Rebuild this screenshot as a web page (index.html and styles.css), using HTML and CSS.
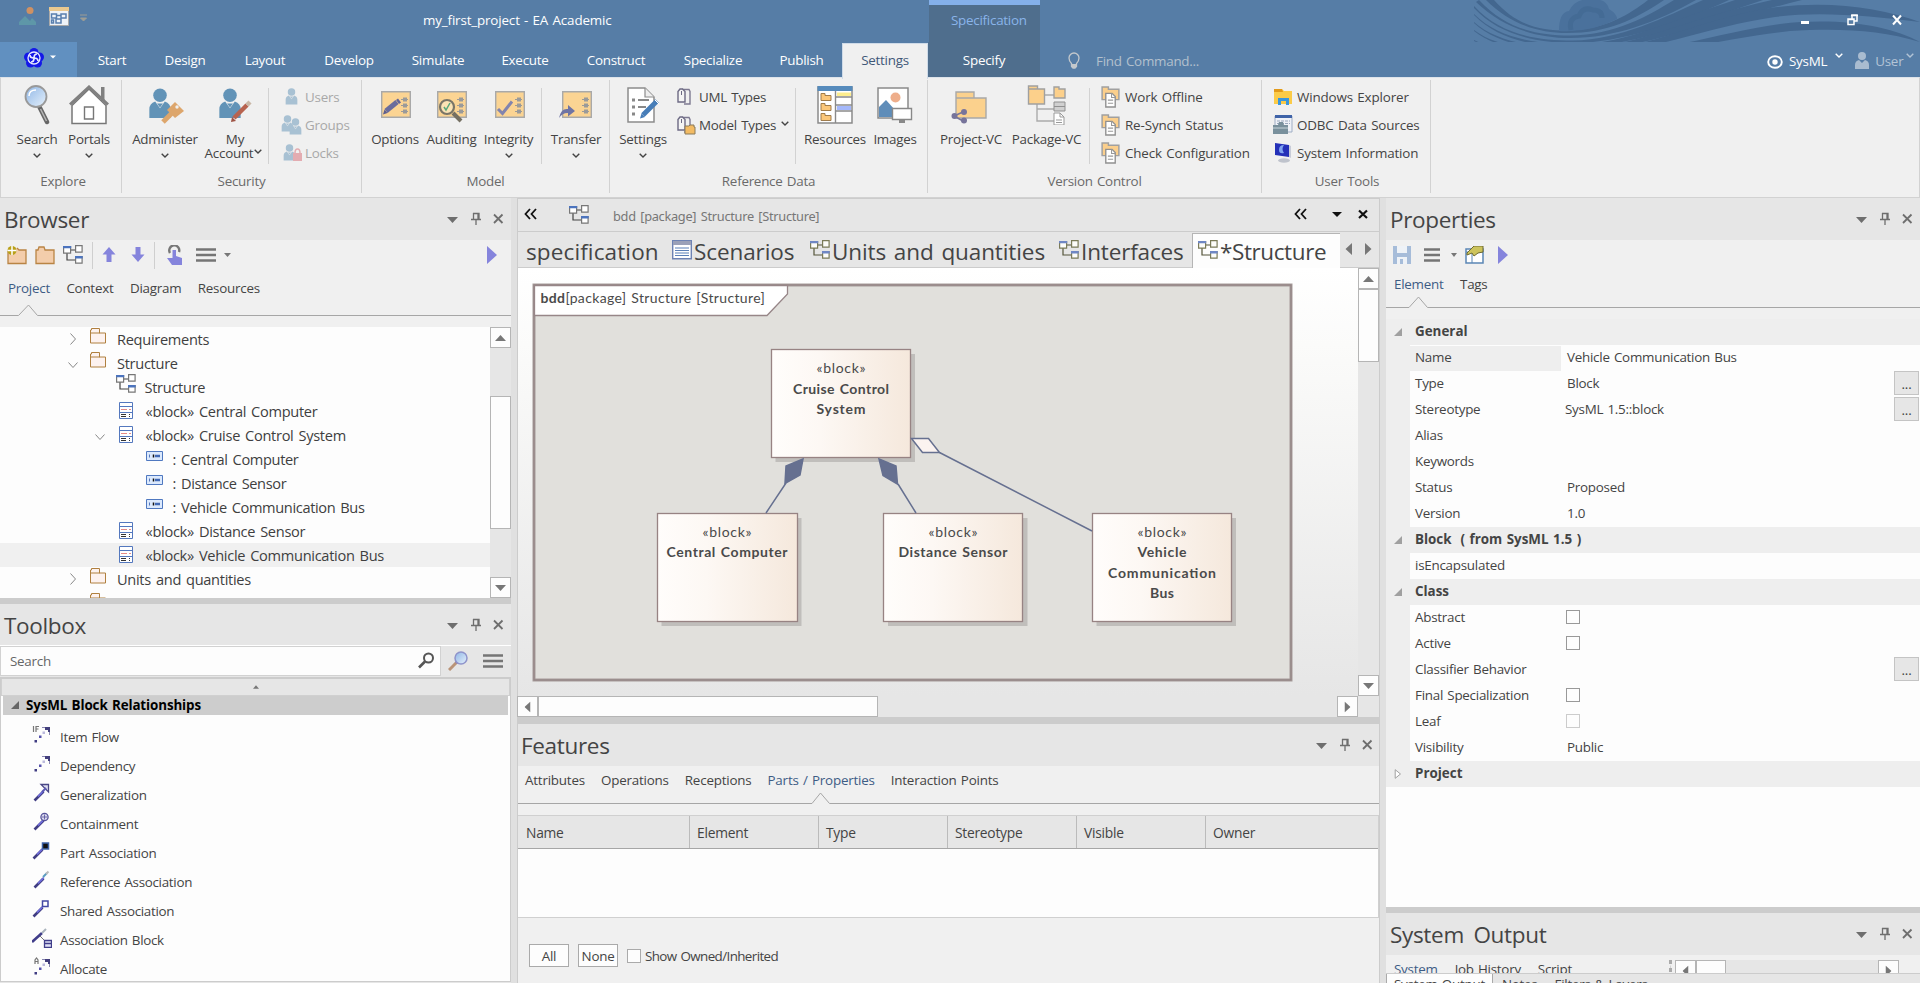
FILE: index.html
```html
<!DOCTYPE html>
<html lang="en">
<head>
<meta charset="utf-8">
<title>my_first_project - EA Academic</title>
<link rel="stylesheet" href="styles.css">
</head>
<body>
<svg class="defs" width="0" height="0">
  <defs>
    <linearGradient id="lens" x1="0" y1="0" x2="1" y2="1"><stop offset="0" stop-color="#8fb6e6"/><stop offset="1" stop-color="#e6f1fb"/></linearGradient>
    <linearGradient id="blk" x1="0" y1="0" x2="1" y2="0"><stop offset="0" stop-color="#fffdfb"/><stop offset=".35" stop-color="#fdf8f4"/><stop offset="1" stop-color="#f5e8dc"/></linearGradient>
  </defs>
  <symbol id="ctl" viewBox="0 0 62 14"><path d="M2 5h11l-5.500 6z" fill="#6e6e6e"/><path d="M28 1.500h6v6M28.500 1v6.500M26 7.500h10M31 8v5M33 1.500v6" fill="none" stroke="#6e6e6e" stroke-width="1.300"/><path d="M49 2.500l8.500 8.500M57.500 2.500l-8.500 8.500" stroke="#6e6e6e" stroke-width="1.800"/></symbol>
  <symbol id="chev" viewBox="0 0 8 5"><path d="M.7.700L4 4 7.300.700" fill="none" stroke="currentColor" stroke-width="1.400"/></symbol>
  <symbol id="up" viewBox="0 0 11 6"><path d="M0 6L5.500 0 11 6z" fill="#777"/></symbol>
  <symbol id="menu" viewBox="0 0 20 14"><path d="M0 1.500h20M0 7h20M0 12.500h20" stroke="#757575" stroke-width="2.400"/></symbol>
  <symbol id="diag" viewBox="0 0 20 20"><path d="M7 5h6M4 8v7h8" fill="none" stroke="#444" stroke-width="1.200"/><path d="M.6 1.600h7v6.500h-7zM12.600.600h6.500v6.500h-6.500zM12.600 11.600h6.500v6.500h-6.500z" fill="#fff" stroke="#777" stroke-width="1.200"/><path d="M0 1h8.200v2.200H0zM12 11h7.700v2.400H12z" fill="#4c74be"/></symbol>
  <symbol id="diag2" viewBox="0 0 20 20"><path d="M7 5h6M4 8v7h8" fill="none" stroke="#55553a" stroke-width="1.200"/><path d="M.6 1.600h7v6.500h-7zM12.600.600h6.500v6.500h-6.500zM12.600 11.600h6.500v6.500h-6.500z" fill="#fdfdfa" stroke="#7b7b58" stroke-width="1.200"/><path d="M0 1h8.200v2.200H0zM12 11h7.700v2.400H12z" fill="#6f87c4"/></symbol>
  <symbol id="fold" viewBox="0 0 16 16"><path d="M.5 15V2h1V.500h8V5h6v10zM1 5h9" fill="#fdf2ef" stroke="#b0803f"/></symbol>
  <symbol id="block" viewBox="0 0 14 17"><path d="M.5.500h13v16H.5zM0 4.500h14M0 10.500h14" fill="#fff" stroke="#5478be"/><path d="M2 7.500h6M10 7.500h2" stroke="#e58a86"/><path d="M2 12.500h5M10 12.500h1M2 14.500h5M10 14.500h1" stroke="#333"/></symbol>
  <symbol id="part" viewBox="0 0 17 10"><path d="M.5.500h16v9H.5z" fill="#dbe9fd" stroke="#4f78c0"/><path d="M3.500 3.500v3" stroke="#5478be"/><path d="M7.500 3.500v3" stroke="#111" stroke-width="1.500"/><path d="M9 5h5" stroke="#4068b4" stroke-width="2.500"/></symbol>
  <symbol id="man" viewBox="0 0 24 32"><circle cx="12" cy="7.500" r="7" fill="#6293b7"/><path d="M1 31V22q0-6 6-8l5 7 5-7q6 2 6 8v9z" fill="#6293b7"/><path d="M9 16h6l-3 4z" fill="#6293b7"/></symbol>
  <symbol id="card" viewBox="0 0 30 27"><path d="M.7.700h28.600v25.600H.7z" fill="#fbd493" stroke="#a9a9a9" stroke-width="1.400"/><path d="M20 8.500h7M20 14.500h7M20 20.500h7" stroke="#9a9a9a" stroke-width="1.200"/><path d="M22 6.500h4v4h-4zM22 12.500h4v4h-4zM22 18.500h4v4h-4z" fill="#9a9a9a"/></symbol>
  <symbol id="vc" viewBox="0 0 18 21"><path d="M1 1h6v2h10v10H1z" fill="#fbcf8c" stroke="#a0a0a0" stroke-width="1.400"/><path d="M4.500 7h6l3 3v10h-9z" fill="#fff" stroke="#909090" stroke-width="1.300"/><path d="M10 7v4h4M6.500 13.500h5M6.500 16.500h5" fill="none" stroke="#999"/></symbol>
  <symbol id="tags" viewBox="0 0 14 18"><path d="M5 1.500h7l1 2V16H7" fill="none" stroke="#7d7991" stroke-width="1.400"/><path d="M1 3.500l2-2.500h2.500L8 3.500V14H1z" fill="#f4f4f4" stroke="#6d6a84" stroke-width="1.400"/><path d="M4.500 3v4" stroke="#6d6a84"/></symbol>
  <symbol id="arr" viewBox="0 0 18 18"><path d="M9 1.500h7.500V9" fill="none" stroke="#8a88b0" stroke-width="1"/><path d="M12 1h5v5h-2V4h-3z" fill="#433f7d"/><path d="M9.500 5.500h2.500v2.500H9.500z" fill="#bbb9dc"/><path d="M6 9.500h2.500v2.500H6z" fill="#5652ac"/><path d="M1.500 14h2.500v2.500h-2.500z" fill="#403d83"/></symbol>
  <symbol id="stick" viewBox="0 0 18 18"><path d="M1.500 16.500l9-9" stroke="#403d83" stroke-width="2.600"/><path d="M5 12.500l6-6" stroke="#716ee0" stroke-width="1.600"/></symbol>
</svg>

<header class="titlebar">
  <svg class="waves" width="460" height="62" viewBox="0 0 460 62">
    <g fill="#43678f">
      <path d="M34 0C57 26 80 30.500 107 30.500 145 30 170 14 188 0h16C174 20 148 33 107 33 78 33 50 24 26 0z"/>
      <path d="M19 0C45 28 75 35.500 110 35.500 155 35 188 16 214 0h22C197 22 155 38 110 38 75 38 42 27 16 2z"/>
      <path d="M14 6C40 34 75 40.500 113 40.500 160 40 205 17 243 0h26C217 24 160 43 113 43 75 43 38 34 14 8z"/>
      <path d="M14 14C38 38 76 44.500 116 44.500 165 44 215 19 275 0h28C227 26 165 47 116 47 76 47 38 40 14 15z"/>
      <path d="M14 22C36 42 76 48.500 120 48.500 170 48 230 18 312 0h30C242 25 170 51 120 51 76 51 36 44 14 23z"/>
      <path d="M14 30C36 47 78 52.500 124 52.500 180 52 240 19 310 8 370 0 420 8 460 22 410 16 360 11 315 17 250 26 180 55 124 55 78 55 36 49 14 31z"/>
      <path d="M14 40C40 53 80 56.500 130 56.500 190 56 260 32 320 24 380 17 430 26 460 42 420 30 380 28 330 31 265 38 190 58 130 58 80 58 40 55 14 41z"/>
    </g>
    <path d="M99 31Q99 12 109 11 116-3 133 0 146-2 149 9 157 14 157 19 130 33 99 31z" fill="#4a719c"/>
    <path d="M111 30q-3-12 8-14 4-10 14-6 9 0 9 8" fill="none" stroke="#446b95" stroke-width="5"/>
  </svg>
  <div class="quick">
    <svg width="17" height="18" viewBox="0 0 17 18"><circle cx="11" cy="3.500" r="3.500" fill="#cf9163"/><path d="M0 18v-3l6-6 5 5 2-3 4 4v3z" fill="#5e97a8"/></svg>
    <svg width="20" height="19" viewBox="0 0 20 19"><path d="M.5.500h19v18H.5z" fill="#eef3f8" stroke="#aaa"/><path d="M0 0h20v4H0z" fill="#e9c88f"/><path d="M2.500 7h5v4h-5zM12 7h5v4h-5zM7 12h5v4H7zM2.500 13h2v3h-2zM7 8.500h5" fill="none" stroke="#587fae" stroke-width="1.500"/></svg>
    <svg width="7" height="8" viewBox="0 0 7 8"><path d="M0 1h7M.5 4h6L3.500 7z" stroke="#9d9d94" fill="#9d9d94"/></svg>
  </div>
  <div class="apptitle">my_first_project - EA Academic</div>
  <div class="spec">Specification</div>
  <div class="winctl"><svg width="110" height="16" viewBox="0 0 110 16"><path d="M4 10.500h8" stroke="#fff" stroke-width="3"/><path d="M55 7V3h5v6h-3M54 3.500h7" fill="none" stroke="#fff" stroke-width="1.500"/><path d="M51 7h6v5.500h-6zM51 7.500h6" fill="none" stroke="#fff" stroke-width="1.500"/><path d="M96 3.500l8 9M104 3.500l-8 9" stroke="#fff" stroke-width="2"/></svg></div>
</header>
<nav class="tabs">
  <div class="file"><svg width="20" height="20" viewBox="0 0 20 20"><g fill="#1418e8"><circle cx="10" cy="4.500" r="4.500"/><circle cx="4.500" cy="9" r="4.500"/><circle cx="15.500" cy="9" r="4.500"/><circle cx="6.500" cy="15" r="4.500"/><circle cx="13.500" cy="15" r="4.500"/></g><g fill="none" stroke="#e8ebff" stroke-width="1.300"><circle cx="10" cy="10" r="6"/><path d="M10 10q-4 0-4-3M10 10q0-4 3-4M10 10q4 0 4 3M10 10q0 4-3 4" stroke-width="1.700"/></g></svg><svg width="6" height="4" viewBox="0 0 6 4"><path d="M0 .500h6L3 3.500z" fill="#fff"/></svg></div>
  <span class="w-start">Start</span><span class="w-design">Design</span><span class="w-layout">Layout</span><span class="w-develop">Develop</span><span class="w-simulate">Simulate</span><span class="w-execute">Execute</span><span class="w-construct">Construct</span><span class="w-special">Specialize</span><span class="w-publish">Publish</span><span class="active">Settings</span><span class="specify">Specify</span>
  <div class="find"><svg width="12" height="17" viewBox="0 0 12 17"><path d="M3.500 11.500Q1 9 1 6a5 5 0 0110 0q0 3-2.500 5.500v3l-1.500 1.500h-2l-1.500-1.500z" fill="none" stroke="#c3c8cc" stroke-width="1.300"/><path d="M4 12h4v3l-1 1H5l-1-1z" fill="#c3c8cc"/></svg>Find Command...</div>
  <div class="user"><svg width="16" height="14" viewBox="0 0 16 14"><ellipse cx="8" cy="7" rx="6.800" ry="5.800" fill="none" stroke="#fff" stroke-width="1.900"/><circle cx="8" cy="7" r="2.700" fill="#fff"/></svg><b>SysML</b><svg class="c" width="8" height="5"><use href="#chev"/></svg><svg class="um" width="14" height="17" viewBox="0 0 14 17"><circle cx="7" cy="4" r="4" fill="#a9bcd0"/><path d="M0 17v-4q0-4 4-5l3 3 3-3q4 1 4 5v4z" fill="#a9bcd0"/></svg><i>User</i><svg class="c dim" width="8" height="5"><use href="#chev"/></svg></div>
</nav>

<section class="ribbon">
  <div class="group g1"><div class="items">
    <div class="big w52"><svg width="40" height="40" viewBox="0 0 40 40"><path d="M22 21l8 16" stroke="#666" stroke-width="4.500" stroke-linecap="round"/><path d="M23.500 24l6 12" stroke="#b5b5b5" stroke-width="1.500"/><circle cx="19" cy="11.500" r="10.500" fill="url(#lens)" stroke="#999" stroke-width="1.800"/><path d="M12 11q0-6 7-6" stroke="#fff" stroke-width="1.500" fill="none"/></svg><span>Search</span><svg width="8" height="5"><use href="#chev"/></svg></div>
    <div class="big w53"><svg width="40" height="40" viewBox="0 0 40 40"><path d="M32 2h3.500v14H32z" fill="#808080"/><path d="M3 20.500L20 4l17 16.500v18H3z" fill="#fff" stroke="#777" stroke-width="1.500"/><path d="M1 19.500L20 2l19 17.500" fill="none" stroke="#808080" stroke-width="3"/><path d="M15.500 22h9v12h-9z" fill="#fff" stroke="#777" stroke-width="1.400"/></svg><span>Portals</span><svg width="8" height="5"><use href="#chev"/></svg></div>
  </div><h6>Explore</h6></div>
  <div class="group g2"><div class="items">
    <div class="big w80"><svg width="40" height="40" viewBox="0 0 40 40"><use href="#man" x="3" y="3" width="24" height="31"/><path d="M18 37l10-10" stroke="#dda66c" stroke-width="5"/><path d="M22 25l8-8 9 9-9 7z" fill="#dda66c"/><circle cx="32" cy="22" r="1.700" fill="#f0f0f0"/></svg><span>Administer</span><svg width="8" height="5"><use href="#chev"/></svg></div>
    <div class="big w60"><svg width="40" height="40" viewBox="0 0 40 40"><use href="#man" x="3" y="3" width="24" height="31"/><path d="M19 33L32 20" stroke="#b8634f" stroke-width="4.500"/><path d="M32 20l3-3" stroke="#c9b7a6" stroke-width="4.500"/><path d="M16 37l1-5 4 4z" fill="#9e5344"/></svg><span>My</span><span class="l2">Account<svg width="8" height="5"><use href="#chev"/></svg></span></div>
    <div class="sep"></div>
    <div class="small dis"><p><svg width="22" height="20" viewBox="0 0 22 20"><use href="#man" x="5" y="1" width="13" height="17"/></svg>Users</p><p><svg width="22" height="20" viewBox="0 0 22 20"><use href="#man" x="1" y="0" width="13" height="17"/><use href="#man" x="9" y="3" width="13" height="17"/></svg>Groups</p><p><svg width="22" height="20" viewBox="0 0 22 20"><use href="#man" x="3" y="1" width="13" height="17"/><path d="M13 10h9v8h-9z" fill="#d76a74"/><path d="M15 10q0-4 2.500-4T20 10" fill="none" stroke="#d76a74" stroke-width="1.500"/></svg>Locks</p></div>
  </div><h6>Security</h6></div>
  <div class="group g3"><div class="items">
    <div class="big w56"><svg width="40" height="40" viewBox="0 0 40 40"><use href="#card" x="6" y="6" width="30" height="27"/><path d="M11 26L22 17" stroke="#6a6c9c" stroke-width="5"/><path d="M22.500 17l2-1.500" stroke="#62659a" stroke-width="5"/><path d="M8 29.500l1.500-5 3 3.500z" fill="#5b5e8f"/></svg><span>Options</span></div>
    <div class="big w58"><svg width="40" height="40" viewBox="0 0 40 40"><use href="#card" x="5" y="6" width="30" height="27"/><circle cx="15" cy="22" r="7" fill="#fbe3b5" stroke="#7a7668" stroke-width="2.200"/><path d="M21 28l8 8" stroke="#757063" stroke-width="4"/><path d="M12 22l2 3 4-7" fill="none" stroke="#57a87b" stroke-width="1.500"/></svg><span>Auditing</span></div>
    <div class="big w58"><svg width="40" height="40" viewBox="0 0 40 40"><use href="#card" x="6" y="6" width="30" height="27"/><path d="M9 24l4.500 4.500L23 16.500" fill="none" stroke="#8284ae" stroke-width="3"/></svg><span>Integrity</span><svg width="8" height="5"><use href="#chev"/></svg></div>
    <div class="sep"></div>
    <div class="big w68"><svg width="40" height="40" viewBox="0 0 40 40"><use href="#card" x="6" y="6" width="30" height="27"/><path d="M3 33q2-10 9-9v-4l7 6-7 5.500v-3.500q-5-.500-9 5z" fill="#6f74a4"/></svg><span>Transfer</span><svg width="8" height="5"><use href="#chev"/></svg></div>
  </div><h6>Model</h6></div>
  <div class="group g4"><div class="items">
    <div class="big w66"><svg width="40" height="40" viewBox="0 0 40 40"><path d="M5 3h17l9 9v25H5z" fill="#fff" stroke="#8c8c8c" stroke-width="1.500"/><path d="M22 3v9h9" fill="#eee" stroke="#8c8c8c" stroke-width="1.200"/><path d="M9 15h3M9 22h3M9 29h3" stroke="#888" stroke-width="3"/><path d="M15 15h11M15 22h8" stroke="#888" stroke-width="1.800"/><path d="M20 30L34 16" stroke="#467db8" stroke-width="5"/><path d="M17 33.500l1.500-5 3.500 3.500z" fill="#467db8"/><path d="M32 15l4 4" stroke="#fff" stroke-width="1"/></svg><span>Settings</span><svg width="8" height="5"><use href="#chev"/></svg></div>
    <div class="small s4"><p><svg width="19" height="20" viewBox="0 0 19 20"><use href="#tags" x="0" y="1" width="14" height="18"/></svg>UML Types</p><p><svg width="19" height="20" viewBox="0 0 19 20"><use href="#tags" x="0" y="1" width="14" height="18"/><path d="M8 11h4l1-1h4v2h1v7H8z" fill="#f3bb63" stroke="#8a7a5b"/></svg>Model Types<svg class="mc" width="8" height="5"><use href="#chev"/></svg></p></div>
    <div class="sep"></div>
    <div class="big w78"><svg width="40" height="40" viewBox="0 0 40 40"><path d="M3 2h34v36H3z" fill="#fff" stroke="#8a8a8a" stroke-width="1.500"/><path d="M2.500 1h35v5h-35z" fill="#568bbc"/><path d="M20.500 6v32M21 12h16M21 20h16M21 26h16" stroke="#8a8a8a" stroke-width="1.400"/><path d="M22 7.500h14v3.500H22z" fill="#fdee8e"/><path d="M22 21h14v4H22z" fill="#a4b8fb"/><path d="M6 8.500h4v2h6v5H6zM6 18.500h4v2h6v5H6zM6 28.500h4v2h6v5H6z" fill="#fbc77a" stroke="#a07c4c"/></svg><span>Resources</span></div>
    <div class="big w46"><svg width="40" height="40" viewBox="0 0 40 40"><path d="M3 3h30v30H3z" fill="#fff" stroke="#8a8a8a" stroke-width="1.500"/><circle cx="20.500" cy="12.500" r="5" fill="#eeae8b"/><path d="M4 32V22l7-7 9 10v7z" fill="#5f8db9"/><path d="M17.500 23.500h19v11h-19z" fill="#fff" stroke="#888" stroke-width="1.400"/><path d="M24 35h6v3h-6z" fill="#888"/></svg><span>Images</span></div>
  </div><h6>Reference Data</h6></div>
  <div class="group g5"><div class="items">
    <div class="big w76"><svg width="40" height="40" viewBox="0 0 40 40"><path d="M5 7h18v6h12v20H5zM5 13h20" fill="#fbd18d" stroke="#a8a8a8" stroke-width="1.400"/><path d="M3 31l9-4M3 31l9 5" stroke="#77759a" stroke-width="1.500"/><circle cx="3.500" cy="31" r="3" fill="#77749b"/><circle cx="13" cy="27" r="3" fill="#77749b"/><circle cx="13" cy="35.500" r="3" fill="#77749b"/></svg><span>Project-VC</span></div>
    <div class="big w77"><svg width="40" height="40" viewBox="0 0 40 40"><path d="M17 10h10M10 19v17h18M10 24h17" fill="none" stroke="#aaa" stroke-width="1.400"/><path d="M1.500 1h9v3h7v15h-16zM27 2h5v2h6v9H27zM1.500 4h10" fill="#fcd08b" stroke="#a0a0a0" stroke-width="1.400"/><path d="M27 17h11v9H27zM27 21.500h11" fill="#d0d0d0" stroke="#909090"/><path d="M27 28h6l4 4v8H27z" fill="#fff" stroke="#999"/><path d="M33 28v4h4M29 35h6M29 37.500h6" fill="none" stroke="#999"/></svg><span>Package-VC</span></div>
    <div class="sep"></div>
    <div class="small s5"><p><svg width="22" height="22" viewBox="0 0 22 22"><use href="#vc" x="0" y="0" width="19" height="22"/></svg>Work Offline</p><p><svg width="22" height="22" viewBox="0 0 22 22"><use href="#vc" x="0" y="0" width="19" height="22"/></svg>Re-Synch Status</p><p><svg width="22" height="22" viewBox="0 0 22 22"><use href="#vc" x="0" y="0" width="19" height="22"/></svg>Check Configuration</p></div>
  </div><h6>Version Control</h6></div>
  <div class="group g6"><div class="items">
    <div class="small s6"><p><svg width="22" height="20" viewBox="0 0 22 20"><path d="M1 2h8l2 2h8v13H1z" fill="#fbcb48"/><path d="M1 2h8l1 3H1z" fill="#e29a1b"/><path d="M5 18v-7h11v7h-3v-4H8v4z" fill="#3a96dd"/></svg>Windows Explorer</p><p><svg width="22" height="20" viewBox="0 0 22 20"><path d="M2 1h17v16H2z" fill="#eef1f7" stroke="#9fadc4"/><path d="M2 0h17v3H2z" fill="#3f63a8"/><path d="M4 6h13M4 8.500h13" stroke="#9aa7bd" stroke-dasharray="3 1"/><path d="M0 10h5l1-3h4l1 3h4v9H0z" fill="#79909c"/><path d="M0 13h15" stroke="#c7d3d9"/></svg>ODBC Data Sources</p><p><svg width="22" height="20" viewBox="0 0 22 20"><ellipse cx="11" cy="17.500" rx="6" ry="2.200" fill="#bfc3cc"/><path d="M2 0l14 2v12L2 12z" fill="#2430b8"/><path d="M16 2l2 1v12l-2-1z" fill="#c8ccd8"/><path d="M6 7q0-5 5-5-3 4 0 8-5 1-5-3z" fill="#7fa3f0"/></svg>System Information</p></div>
  </div><h6>User Tools</h6></div>
</section>

<main>
  <div class="col left">
    <section class="panel browser">
      <div class="head"><h2>Browser</h2><svg width="62" height="14"><use href="#ctl"/></svg></div>
      <div class="tools">
        <svg width="20" height="20" viewBox="0 0 20 20"><path d="M1 6V18.500h18V5h-7l-2-2" fill="#f3cdab" stroke="#b98444" stroke-width="1.300"/><circle cx="5" cy="5.500" r="4.500" fill="#b9a018"/><path d="M5 1v9M.5 5.500h9" stroke="#fff" stroke-width="1.500"/></svg>
        <svg class="m8" width="20" height="20" viewBox="0 0 20 20"><path d="M1 5h2l1-3h5l1 3h9v13.500H1z" fill="#f3cdab" stroke="#b98444" stroke-width="1.300"/></svg>
        <svg class="m8" width="20" height="20"><use href="#diag"/></svg>
        <i class="bar"></i>
        <svg class="m11" width="14" height="16" viewBox="0 0 14 16"><path d="M7 0l6.500 7.500h-4V15h-5V7.500h-4z" fill="#8584dc"/></svg>
        <svg class="m15" width="14" height="16" viewBox="0 0 14 16"><path d="M7 15L.5 7.500h4V0h5v7.500h4z" fill="#8584dc"/></svg>
        <i class="bar"></i>
        <svg class="m10" width="16" height="20" viewBox="0 0 16 20"><path d="M3 8a5 5 0 119-1" fill="none" stroke="#777" stroke-width="2.400"/><path d="M5.500 5h3.500v6l6 2v7H5l-5-7h5.500z" fill="#8584dc"/></svg>
        <svg class="m13" width="20" height="14"><use href="#menu"/></svg>
        <svg class="m8" width="7" height="4" viewBox="0 0 7 4"><path d="M0 0h7L3.500 4z" fill="#777"/></svg>
        <svg class="end" width="10" height="18" viewBox="0 0 10 18"><path d="M0 0l10 9-10 9z" fill="#8584dc"/></svg>
      </div>
      <div class="subtabs"><span class="on">Project</span><span>Context</span><span>Diagram</span><span>Resources</span></div>
      <svg class="rule" width="511" height="12" viewBox="0 0 511 12"><path d="M0 11.500h18.500L28.500 1l9 10.500H511" fill="none" stroke="#a6a6a6"/></svg>
      <div class="treewrap">
        <div class="tree">
          <div class="row d1"><svg class="ex" width="6" height="12" viewBox="0 0 6 12"><path d="M.5.500l5 5.500-5 5.500" fill="none" stroke="#888"/></svg><svg width="16" height="16"><use href="#fold"/></svg>Requirements</div>
          <div class="row d1"><svg class="ex v" width="10" height="6" viewBox="0 0 10 6"><path d="M.5.500L5 5.500l4.500-5" fill="none" stroke="#888"/></svg><svg width="16" height="16"><use href="#fold"/></svg>Structure</div>
          <div class="row d2 dg"><svg width="20" height="20"><use href="#diag"/></svg>Structure</div>
          <div class="row d2"><svg width="14" height="17"><use href="#block"/></svg>«block» Central Computer</div>
          <div class="row d2 op"><svg class="ex v" width="10" height="6" viewBox="0 0 10 6"><path d="M.5.500L5 5.500l4.500-5" fill="none" stroke="#888"/></svg><svg width="14" height="17"><use href="#block"/></svg>«block» Cruise Control System</div>
          <div class="row d3"><svg width="17" height="10"><use href="#part"/></svg>: Central Computer</div>
          <div class="row d3"><svg width="17" height="10"><use href="#part"/></svg>: Distance Sensor</div>
          <div class="row d3"><svg width="17" height="10"><use href="#part"/></svg>: Vehicle Communication Bus</div>
          <div class="row d2"><svg width="14" height="17"><use href="#block"/></svg>«block» Distance Sensor</div>
          <div class="row d2 sel"><svg width="14" height="17"><use href="#block"/></svg>«block» Vehicle Communication Bus</div>
          <div class="row d1"><svg class="ex" width="6" height="12" viewBox="0 0 6 12"><path d="M.5.500l5 5.500-5 5.500" fill="none" stroke="#888"/></svg><svg width="16" height="16"><use href="#fold"/></svg>Units and quantities</div>
          <div class="row d1 last"><svg width="16" height="16"><use href="#fold"/></svg></div>
        </div>
        <div class="vscroll"><span class="btn"><svg width="11" height="6"><use href="#up"/></svg></span><span class="thumb t1"></span><span class="btn dn"><svg width="11" height="6"><use href="#up"/></svg></span></div>
      </div>
    </section>
    <section class="panel toolbox">
      <div class="head"><h2>Toolbox</h2><svg width="62" height="14"><use href="#ctl"/></svg></div>
      <div class="searchrow"><div class="input"><span>Search</span><svg width="17" height="17" viewBox="0 0 17 17"><circle cx="10.500" cy="6" r="4.500" fill="none" stroke="#555" stroke-width="2"/><path d="M7 9.500l-6 6" stroke="#555" stroke-width="2.600"/></svg></div><svg class="lens2" width="20" height="20" viewBox="0 0 20 20"><path d="M1 19l8-8" stroke="#ba9478" stroke-width="3"/><path d="M8 12l2-2" stroke="#8a83bb" stroke-width="3"/><circle cx="13" cy="7" r="6" fill="url(#lens)" stroke="#8f94cb" stroke-width="1.500"/></svg><svg width="20" height="14"><use href="#menu"/></svg></div>
      <div class="tbox">
        <div class="strip"><svg width="6" height="4"><use href="#up"/></svg></div>
        <div class="ghead"><svg width="8" height="8" viewBox="0 0 8 8"><path d="M8 0v8H0z" fill="#666"/></svg>SysML Block Relationships</div>
        <div class="tlist">
          <div><svg width="20" height="20" viewBox="0 0 20 20"><path d="M1.500 1v6M4 7V1.500h3M4 4h2.500" fill="none" stroke="#777" stroke-width="1.200"/><use href="#arr" x="1" y="1" width="18" height="18"/></svg>Item Flow</div>
          <div><svg width="20" height="20" viewBox="0 0 20 20"><use href="#arr" x="1" y="1" width="18" height="18"/></svg>Dependency</div>
          <div><svg width="20" height="20" viewBox="0 0 20 20"><use href="#stick" x="1" y="1" width="18" height="18"/><path d="M9 1.500h7.500V9z" fill="#dedef0" stroke="#4a4786" stroke-width="1.300"/><path d="M10 9l4-4" stroke="#5c59b5" stroke-width="2"/></svg>Generalization</div>
          <div><svg width="20" height="20" viewBox="0 0 20 20"><use href="#stick" x="1" y="1" width="18" height="18"/><circle cx="12.500" cy="5" r="3.600" fill="#dcdcf0" stroke="#55529a" stroke-width="1.300"/><path d="M10 5h5M12.500 2.500v5" stroke="#55529a" stroke-width=".8"/></svg>Containment</div>
          <div><svg width="20" height="20" viewBox="0 0 20 20"><use href="#stick" x="0" y="1" width="18" height="18"/><path d="M10.500 2h6v6h-6z" fill="#111" stroke="#3e63a8" stroke-width="1.500"/></svg>Part Association</div>
          <div><svg width="20" height="20" viewBox="0 0 20 20"><use href="#stick" x="1" y="1" width="18" height="18"/><path d="M11 7l4-4" stroke="#5a9cc0" stroke-width="2"/><path d="M14 4l2.500-2.500" stroke="#bbb" stroke-width="2"/></svg>Reference Association</div>
          <div><svg width="20" height="20" viewBox="0 0 20 20"><use href="#stick" x="0" y="1" width="18" height="18"/><path d="M10.500 2h5.500v5.500h-5.500z" fill="#fff" stroke="#4348a4" stroke-width="1.500"/></svg>Shared Association</div>
          <div><svg width="20" height="20" viewBox="0 0 20 20"><path d="M0 14L10 5" stroke="#403d8a" stroke-width="2.600"/><path d="M10 5l4-4" stroke="#aab4bd" stroke-width="2"/><path d="M8 8l5 5" stroke="#777"/><path d="M12.500 12.500h7v7h-7zM12.500 15.500h7" fill="#dfe0f4" stroke="#403d8a" stroke-width="1.300"/></svg>Association Block</div>
          <div><svg width="20" height="20" viewBox="0 0 20 20"><path d="M3 7V3l1.500-2L6 3v4M3 4.500h3" fill="none" stroke="#777" stroke-width="1.200"/><use href="#arr" x="1" y="1" width="18" height="18"/></svg>Allocate</div>
        </div>
      </div>
    </section>
  </div>

  <div class="col center">
    <div class="crumbs">
      <svg width="13" height="12" viewBox="0 0 13 12"><path d="M6 1L1.500 6 6 11M12 1L7.500 6l4.500 5" fill="none" stroke="#111" stroke-width="1.800"/></svg>
      <svg class="cd" width="20" height="20"><use href="#diag"/></svg><span>bdd [package] Structure [Structure]</span>
      <svg class="cr" width="76" height="12" viewBox="0 0 76 12"><path d="M6 1L1.500 6 6 11M12 1L7.500 6l4.500 5" fill="none" stroke="#111" stroke-width="1.800"/><path d="M38 4h10l-5 5z" fill="#111"/><path d="M65 2.500l8 7.500M73 2.500l-8 7.500" stroke="#111" stroke-width="2.200"/></svg>
    </div>
    <div class="doctabs">
      <span class="t-spec">specification</span>
      <span class="t-scen"><svg width="20" height="20" viewBox="0 0 20 20"><path d="M.7.700h18.600v18H.7z" fill="#fff" stroke="#6d82b3" stroke-width="1.400"/><path d="M1 1h18v4H1z" fill="#9aa0b8"/><path d="M3 8h14M3 10.500h14M3 13h14M3 15.500h14" stroke="#5b80b8" stroke-width="1.200"/></svg>Scenarios</span>
      <span class="t-unit"><svg width="20" height="20"><use href="#diag2"/></svg>Units and quantities</span>
      <span class="t-int"><svg width="20" height="20"><use href="#diag2"/></svg>Interfaces</span>
      <span class="t-str"><svg width="20" height="20"><use href="#diag2"/></svg>*Structure</span>
      <svg class="nav" width="28" height="12" viewBox="0 0 28 12"><path d="M7 0v12L.5 6zM20 0v12l6.500-6z" fill="#777"/></svg>
    </div>
    <div class="canvasgrid">
      <svg class="canvas" width="840" height="428" viewBox="518 268 840 428">
        <rect x="534" y="285" width="757" height="395" fill="#e1e0dc" stroke="#a69b9a" stroke-width="3"/>
        <rect x="534" y="285" width="757" height="395" fill="none" stroke="#8f8080" stroke-width="1"/>
        <path d="M534.500 285.500H787.500v8.500L767 315.500H534.500z" fill="#fff" stroke="#978688" stroke-width="1.300"/>
        <text class="ft" x="540.500" y="302.500" textLength="224" lengthAdjust="spacing"><tspan font-weight="700">bdd</tspan>[package] Structure [Structure]</text>
        <g fill="#c0bebb"><path d="M775.500 354h139.500v108h-139.500zM661.500 518h140v108h-140zM888 518h139.500v108H888zM1096.500 518h139.500v108h-139.500z"/></g>
        <g fill="url(#blk)" stroke="#978383" stroke-width="1.300"><rect x="771.500" y="349.500" width="139" height="108"/><rect x="657.500" y="513.500" width="140" height="108"/><rect x="883.500" y="513.500" width="139" height="108"/><rect x="1092.500" y="513.500" width="139" height="108"/></g>
        <g stroke="#667090" stroke-width="1.500" fill="#667090"><path d="M766 513l20-30M916 513l-18-29M939.500 452.500L1092 531" fill="none"/><path d="M803 459l-17 7-1 17.500L800 475z"/><path d="M879 459l17 7 1.500 18-14.500-8.500z"/><path d="M911.500 438.500h17l11 14h-17z" fill="#fbf3f0"/></g>
        <g class="bt" text-anchor="middle"><text x="841" y="373" textLength="49">«block»</text><text x="841" y="394" class="b" textLength="96">Cruise Control</text><text x="841" y="414" class="b" textLength="49">System</text>
        <text x="727" y="537" textLength="49">«block»</text><text x="727" y="557" class="b" textLength="121">Central Computer</text>
        <text x="953" y="537" textLength="49">«block»</text><text x="953" y="557" class="b" textLength="109">Distance Sensor</text>
        <text x="1162" y="537" textLength="49">«block»</text><text x="1162" y="557" class="b" textLength="49">Vehicle</text><text x="1162" y="578" class="b" textLength="108">Communication</text><text x="1162" y="598" class="b" textLength="24">Bus</text></g>
      </svg>
      <div class="vscroll cv"><span class="btn"><svg width="11" height="6"><use href="#up"/></svg></span><span class="thumb t2"></span><span class="btn dn"><svg width="11" height="6"><use href="#up"/></svg></span></div>
      <div class="hscroll"><span class="btn l"><svg width="11" height="6"><use href="#up"/></svg></span><span class="thumb"></span><span class="btn r"><svg width="11" height="6"><use href="#up"/></svg></span></div>
    </div>
    <section class="panel features">
      <div class="head"><h2>Features</h2><svg width="62" height="14"><use href="#ctl"/></svg></div>
      <div class="subtabs"><span>Attributes</span><span>Operations</span><span>Receptions</span><span class="on">Parts / Properties</span><span>Interaction Points</span></div>
      <svg class="rule" width="863" height="12" viewBox="0 0 863 12"><path d="M0 11.500h294L302.500 1l9 10.500H863" fill="none" stroke="#a6a6a6"/></svg>
      <div class="table"><div class="th"><span>Name</span><span>Element</span><span>Type</span><span>Stereotype</span><span>Visible</span><span>Owner</span></div></div>
      <div class="foot"><button>All</button><button>None</button><label><i></i>Show Owned/Inherited</label></div>
    </section>
  </div>

  <div class="col right">
    <section class="panel props">
      <div class="head"><h2>Properties</h2><svg width="62" height="14"><use href="#ctl"/></svg></div>
      <div class="tools">
        <svg width="18" height="18" viewBox="0 0 18 18"><path d="M0 0h18v18H0z" fill="#a6bcd9"/><path d="M4 0h10v7H4zM4 11h10v7H4z" fill="#eef2f7"/><path d="M7 13h3v5H7z" fill="#a6bcd9"/></svg>
        <svg class="m13" width="16" height="14" viewBox="0 0 16 14"><path d="M0 1.500h16M0 7h16M0 12.500h16" stroke="#757575" stroke-width="2.400"/></svg>
        <svg class="m11" width="6" height="4" viewBox="0 0 6 4"><path d="M0 0h6L3 4z" fill="#777"/></svg>
        <svg class="m8" width="20" height="18" viewBox="0 0 20 18"><path d="M1 3h17v14H1z" fill="#fff" stroke="#5b86b5" stroke-width="1.500"/><path d="M7 4v13M1 6h17" stroke="#5b86b5"/><path d="M2 7L9 0h9v6l-5 1-4 3-2-3-5 2z" fill="#ccc35c" stroke="#6f6b32"/></svg>
        <svg class="m13" width="10" height="18" viewBox="0 0 10 18"><path d="M0 0l10 9-10 9z" fill="#8584dc"/></svg>
      </div>
      <div class="subtabs"><span class="on">Element</span><span>Tags</span></div>
      <svg class="rule" width="534" height="12" viewBox="0 0 534 12"><path d="M0 11.500h23L32.500 1l9 10.500H534" fill="none" stroke="#a6a6a6"/></svg>
      <div class="pgrid">
        <div class="pg"><svg width="8" height="8" viewBox="0 0 8 8"><path d="M8 0v8H0z" fill="#a0a0a0"/></svg>General</div>
        <div class="pr sel"><span>Name</span><em>Vehicle Communication Bus</em></div>
        <div class="pr"><span>Type</span><em>Block</em><b>...</b></div>
        <div class="pr"><span>Stereotype</span><em class="st">SysML 1.5::block</em><b>...</b></div>
        <div class="pr"><span>Alias</span></div>
        <div class="pr"><span>Keywords</span></div>
        <div class="pr"><span>Status</span><em>Proposed</em></div>
        <div class="pr"><span>Version</span><em>1.0</em></div>
        <div class="pg"><svg width="8" height="8" viewBox="0 0 8 8"><path d="M8 0v8H0z" fill="#a0a0a0"/></svg>Block&nbsp; ( from SysML 1.5 )</div>
        <div class="pr"><span>isEncapsulated</span></div>
        <div class="pg"><svg width="8" height="8" viewBox="0 0 8 8"><path d="M8 0v8H0z" fill="#a0a0a0"/></svg>Class</div>
        <div class="pr"><span>Abstract</span><i></i></div>
        <div class="pr"><span>Active</span><i></i></div>
        <div class="pr"><span>Classifier Behavior</span><b>...</b></div>
        <div class="pr"><span>Final Specialization</span><i></i></div>
        <div class="pr"><span>Leaf</span><i class="off"></i></div>
        <div class="pr"><span>Visibility</span><em>Public</em></div>
        <div class="pg"><svg width="7" height="10" viewBox="0 0 7 10"><path d="M.7.700v8.600L6 5z" fill="#fff" stroke="#a0a0a0"/></svg>Project</div>
      </div>
    </section>
    <section class="panel sysout">
      <div class="head"><h2>System Output</h2><svg width="62" height="14"><use href="#ctl"/></svg></div>
      <div class="so"><span class="on">System</span><span>Job History</span><span>Script</span><div class="sb"><i class="grip"></i><span class="btn l"><svg width="11" height="6"><use href="#up"/></svg></span><span class="thumb"></span><span class="btn r"><svg width="11" height="6"><use href="#up"/></svg></span></div></div>
      <div class="bt2"><span class="on">System Output</span><span>Notes</span><span>Filters &amp; Layers</span></div>
    </section>
  </div>
</main>
</body>
</html>
```
FILE: styles.css
```css
* { box-sizing: border-box; }
body { margin: 0; width: 1920px; height: 983px; overflow: hidden; background: #e0e0e0; color: #444; font: 13.4px/18px "Open Sans", "Noto Sans", sans-serif; letter-spacing: -.25px; word-spacing: 1px; display: flex; flex-direction: column; }
svg { display: block; flex: none; }
.defs { position: absolute; }
h2, h6, p { margin: 0; font-weight: 400; }

/* title bar */
.titlebar { height: 42px; background: #567da6; color: #fff; display: flex; position: relative; flex: none; }
.waves { position: absolute; left: 1460px; top: 0; }
.quick { width: 423px; padding: 7px 0 0 19px; display: flex; gap: 13px; }
.quick svg:last-child { margin: 7px 0 0 -2px; }
.apptitle { width: 506px; padding-top: 11px; letter-spacing: -.15px; }
.spec { width: 111px; height: 42px; border-top: 5px solid #84b0ea; background: #4f6e8d; color: #8ab4ea; padding: 6px 0 0 22px; letter-spacing: -.25px; }
.winctl { margin-left: 757px; padding-top: 12px; position: relative; }
.tabs { height: 35px; background: #567da6; display: flex; flex: none; color: #fff; position: relative; }
.tabs > span { display: flex; align-items: center; justify-content: center; height: 35px; }
.file { width: 77px; background: #6190c0; display: flex; padding: 6px 0 0 24px; gap: 6px; margin-right: 2px; }
.file svg:last-child { margin-top: 7px; }
.w-start { width: 66px; } .w-design { width: 80px; } .w-layout { width: 80px; } .w-develop { width: 88px; } .w-simulate { width: 90px; } .w-execute { width: 84px; } .w-construct { width: 98px; } .w-special { width: 96px; } .w-publish { width: 81px; }
.tabs > .active { width: 86px; height: 36px; background: #f0f0f0; border: 1px solid #cfdbe8; border-bottom: 0; color: #3f5878; margin-top: 1px; position: relative; padding-bottom: 3px; }
.tabs > .specify { width: 112px; background: #4f6e8d; }
.find { display: flex; align-items: flex-start; gap: 16px; padding: 10px 0 0 28px; color: #b3c0cd; width: 727px; }
.user { display: flex; gap: 6px; padding-top: 10px; white-space: nowrap; }
.user b, .user i { font-weight: 400; font-style: normal; }
.user > svg:first-child { margin-top: 3px; }
.user .um { margin-left: 6px; }
.user .c { margin: 1px 0 0 2px; }
.user i { color: #b3c4d6; }
.user .dim { color: #b3c4d6; margin-left: -3px; }

/* ribbon */
.ribbon { height: 121px; background: #f0f0f0; border: 1px solid #d2d2d2; border-top-color: #dde3ea; display: flex; flex: none; }
.group { border-right: 1px solid #d2d2d2; height: 113px; margin-top: 2px; display: flex; flex-direction: column; }
.g1 { width: 121px; } .g2 { width: 240px; } .g3 { width: 248px; } .g4 { width: 318px; } .g5 { width: 334px; } .g6 { width: 169px; }
.items { display: flex; height: 92px; }
.group h6 { font-size: 13.4px; line-height: 18px; color: #6a6a6a; text-align: center; }
.g1 h6 { padding-left: 4px; } .g6 h6 { padding-left: 2px; }
.big { display: flex; flex-direction: column; align-items: center; padding-top: 5px; white-space: nowrap; flex: none; }
.big > svg:first-child { height: 40px; margin-bottom: 5px; }
.big > span { line-height: 18px; }
.big > svg:last-child { margin-top: 5px; }
.w60 > span { line-height: 14px; margin-top: 2px; }
.big .l2 { display: flex; margin: 0 3px 0 0; gap: 1px; }
.l2 svg { margin-top: 3px; }
.w52 { width: 52px; margin-left: 10px; } .w53 { width: 52px; } .w80 { width: 80px; margin-left: 3px; } .w60 { width: 62px; margin-left: -1px; margin-right: 2px; } .w56 { width: 56px; margin-left: 5px; } .w58 { width: 57px; } .w68 { width: 68px; } .w66 { width: 66px; } .w78 { width: 78px; } .w46 { width: 46px; margin-left: -2px; } .w76 { width: 76px; margin-left: 5px; } .w77 { width: 77px; margin-left: -1px; }
.sep { width: 1px; height: 76px; margin-top: 8px; background: #d2d2d2; flex: none; }
.g3 .sep { margin-left: 4px; }
.small { padding: 3px 0 0 11px; white-space: nowrap; }
.small p { height: 28px; display: flex; align-items: center; gap: 2px; }
.dis { color: #a8a8a8; } .dis svg { opacity: .5; }
.dis p { gap: 3px; }
.s4 { padding-left: 1px; width: 119px; } .s4 p { gap: 3px; } .mc { margin: -3px 0 0 2px; } .s5 { padding-left: 11px; letter-spacing: -.14px; } .s6 { padding-left: 11px; letter-spacing: -.14px; }
.g5 .sep { margin-left: 4px; }

/* docked columns */
main { flex: 1; display: flex; min-height: 0; }
.col { display: flex; flex-direction: column; flex: none; }
.left { width: 511px; margin-right: 6px; }
.center { width: 863px; margin-right: 6px; border-left: 1px solid #ccc; border-right: 1px solid #ccc; }
.right { width: 534px; }
.panel { background: #f0f0f0; display: flex; flex-direction: column; overflow: hidden; }
.head { height: 42px; background: #e6e6e6; display: flex; justify-content: space-between; padding: 0 4px 0 4px; flex: none; }
.head svg { margin-top: 14px; }
h2 { font-size: 22.5px; line-height: 43px; letter-spacing: -.32px; word-spacing: 4px; color: #444; }
.tools { display: flex; align-items: center; height: 30px; padding-left: 7px; flex: none; }
.m8 { margin-left: 8px; } .m10 { margin-left: 10px; } .m11 { margin-left: 11px; } .m13 { margin-left: 13px; } .m15 { margin-left: 15px; }
.bar { width: 1px; height: 27px; background: #cfcfcf; margin-left: 9px; }
.bar + .m11 { margin-left: 9px; }
.bar + .m10 { margin-left: 12px; }
.end { margin-left: auto; margin-right: 14px; }
.subtabs { display: flex; gap: 16.500px; padding: 9px 0 0 8px; height: 34px; flex: none; }
.on { color: #3d5c85; }
.rule { flex: none; }
.browser { height: 400px; }
.treewrap { margin-top: 11px; height: 271px; display: flex; background: #fdfdfd; overflow: hidden; flex: none; }
.tree { width: 490px; }
.row { height: 24px; display: flex; align-items: center; font-size: 14.6px; letter-spacing: -.3px; word-spacing: 1.500px; color: #3f3f3f; white-space: nowrap; }
.row > svg:not(.ex) { margin-top: -7px; }
.ex { width: 10px; }
.d1 { padding-left: 90px; gap: 11px; } .d1 .ex { margin: 0 1px 0 -22px; width: 10px; }
.row .ex.v { margin-top: 4px; }
.d2 { padding-left: 119px; gap: 12.500px; }
.row.d2 > svg:not(.ex) { margin-top: -2px; }
.row.dg { padding-left: 116px; gap: 8.500px; }
.row.dg > svg:not(.ex) { margin-top: -7px; }
.op .ex { margin: 4px 1.500px 0 -24px; }
.row.d3 { padding-left: 146px; gap: 9.500px; letter-spacing: -.36px; }
.sel { background: #f0f0f0; }
.row.last > svg:not(.ex) { margin-top: -5px; }
.vscroll { width: 21px; background: #e6e6e6; display: flex; flex-direction: column; flex: none; }
.btn { width: 21px; height: 21px; border: 1px solid #b5b5b5; background: #fdfdfd; display: flex; align-items: center; justify-content: center; flex: none; }
.dn { margin-top: auto; } .dn svg { transform: scaleY(-1); }
.l svg { transform: rotate(-90deg); } .r svg { transform: rotate(90deg); }
.thumb { border: 1px solid #b5b5b5; background: #fdfdfd; flex: none; }
.t1 { height: 133px; margin-top: 48px; } .t2 { height: 73px; }
.toolbox { flex: 1; border-top: 6px solid #ccc; background: #e6e6e6; }
.searchrow { display: flex; align-items: center; border-top: 1px solid #fff; height: 32px; gap: 7px; flex: none; padding-bottom: 1px; }
.toolbox .head { height: 41px; }
.input { width: 441px; height: 30px; border: 1px solid #d2d2d2; background: #fdfdfd; display: flex; align-items: center; justify-content: space-between; padding: 0 5px 1px 9px; color: #666; }
.searchrow > svg:last-child { margin-left: 8px; }
.tbox { border: 1px solid #ccc; border-top: 2px solid #ccc; height: 305px; background: #fdfdfd; flex: none; display: flex; flex-direction: column; }
.strip { height: 17px; background: #e6e6e6; border: 1px solid #d0d0d0; border-top: 0; display: flex; justify-content: center; align-items: center; flex: none; }
.ghead { height: 19px; margin: 0 2px; background: #cdcdcd; color: #000; font-weight: 700; display: flex; align-items: center; padding: 0 0 2px 8px; gap: 7px; letter-spacing: -.12px; flex: none; }
.tlist { padding-top: 7px; }
.tlist div { height: 29px; display: flex; align-items: center; padding-left: 31px; gap: 8px; letter-spacing: -.3px; }
.tlist svg { margin-top: -3px; }

/* document area */
.crumbs { height: 34px; background: #e6e6e6; border-top: 1px solid #ccc; border-bottom: 1px solid #ccc; display: flex; padding: 9px 0 0 6px; flex: none; color: #777; font: 12.8px/17px "Noto Sans", sans-serif; letter-spacing: -.3px; word-spacing: 1.500px; }
.cd { margin: -3px 24px 0 32px; }
.cr { margin-left: auto; margin-right: 9px; }
.doctabs { height: 36px; background: #e6e6e6; border-bottom: 1px solid #ccc; display: flex; font-size: 22.5px; letter-spacing: -.1px; word-spacing: 2px; line-height: 36px; white-space: nowrap; flex: none; }
.doctabs span { display: flex; gap: 2px; padding-top: 2px; height: 36px; }
.doctabs svg { margin-top: 6px; }
.t-spec { width: 154px; padding-left: 8px; letter-spacing: .12px; } .t-scen { width: 138px; } .t-unit { width: 249px; } .t-int { width: 133px; letter-spacing: -.15px; }
.doctabs .t-str { width: 148px; background: #fdfdfd; border: solid #b5b5b5; border-width: 1px 0 0 1px; margin-top: 1px; padding: 0 0 0 5px; letter-spacing: -.4px; }
.doctabs .nav { margin: 11px 0 0 5px; }
.canvasgrid { display: grid; grid-template: 428px 21px / 840px 21px; background: #e6e6e6; flex: none; }
.canvas { background: linear-gradient(#fff, #fbfbfa 18%, #e6e6e6); }
.ft { font: 14px Lato, sans-serif; fill: #4a4a4a; }
.bt { font: 14px Lato, sans-serif; fill: #4a4a4a; letter-spacing: 0; } .bt .b { font-weight: 700; }
.hscroll { display: flex; margin-left: -1px; }
.hscroll .thumb { width: 340px; } .hscroll .r { margin-left: auto; }
.features { flex: 1; border-top: 7px solid #ccc; }
.features .head { margin-right: -1px; padding-left: 3px; }
.features .subtabs { padding: 5px 0 0 7px; height: 26px; gap: 16px; letter-spacing: -.2px; }
.table { margin-top: 11px; height: 103px; border: 1px solid #d0d0d0; border-left: 0; background: #fdfdfd; flex: none; }
.th { display: grid; grid-template-columns: 172px repeat(4, 129px) 1fr; height: 33px; background: #e6e6e6; border-bottom: 1px solid #a6a6a6; font-size: 13.8px; }
.th span { padding: 8px 0 0 7px; border-right: 1px solid #bbb; }
.th span:first-child { padding-left: 8px; }
.th span:last-child { border: 0; }
.foot { display: flex; gap: 9px; padding: 26px 0 0 11px; }
button { font: inherit; letter-spacing: inherit; color: #444; width: 40px; height: 23px; background: #fdfdfd; border: 1px solid #aaa; padding: 0; line-height: 20px; }
.foot label { display: flex; gap: 4px; align-items: center; letter-spacing: -.6px; }
.foot i { width: 14px; height: 14px; border: 1px solid #aaa; background: #fdfdfd; }

/* properties */
.props { height: 709px; }
.props .subtabs { padding-top: 5px; height: 26px; }
.pgrid { margin-top: 11px; background: #fdfdfd; flex: 1; }
.pg, .pr { height: 26px; display: flex; align-items: center; background: #eee; }
.pg { font-weight: 700; padding: 0 0 2px 8px; letter-spacing: 0; }
.pg svg { width: 8px; margin: 2px 13px 0 0; }
.pr { border-left: 24px solid #eee; background: #fdfdfd; }
.pr span { width: 151px; height: 25px; padding-left: 5px; line-height: 23px; }
.pr.sel span { background: #eee; }
.pr em { font-style: normal; padding: 0 0 2px 6px; } .pr .st { padding-left: 4px; }
.pr b { width: 25px; height: 24px; margin: -2px 1px 0 auto; border: 1px solid #c4c4c4; background: #e6e6e6; font-weight: 400; text-align: center; line-height: 25px; }
.pr i { width: 14px; height: 14px; border: 1px solid #999; margin: -2px 0 0 5px; } .pr .off { border-color: #ccc; }
.sysout { flex: 1; border-top: 6px solid #ccc; }
.so { height: 18px; display: flex; gap: 17px; padding: 5px 0 0 8px; overflow: hidden; flex: none; }
.sb { display: flex; margin-left: auto; width: 230px; height: 21px; margin-right: 21px; background: linear-gradient(90deg, #f0f0f0 6px, #e6e6e6 6px); }
.sb .btn.r { margin-left: auto; } .sb .thumb { width: 30px; }
.grip { width: 6px; flex: none; border-left: 3px dotted #aaa; height: 12px; }
.bt2 { height: 20px; background: #e6e6e6; border-top: 1px solid #ccc; display: flex; overflow: hidden; }
.bt2 span { padding: 1px 8px 0 9px; } .bt2 .on { color: #444; background: #fdfdfd; border-right: 1px solid #aaa; border-left: 1px solid #aaa; padding: 1px 7px 0; }
```
